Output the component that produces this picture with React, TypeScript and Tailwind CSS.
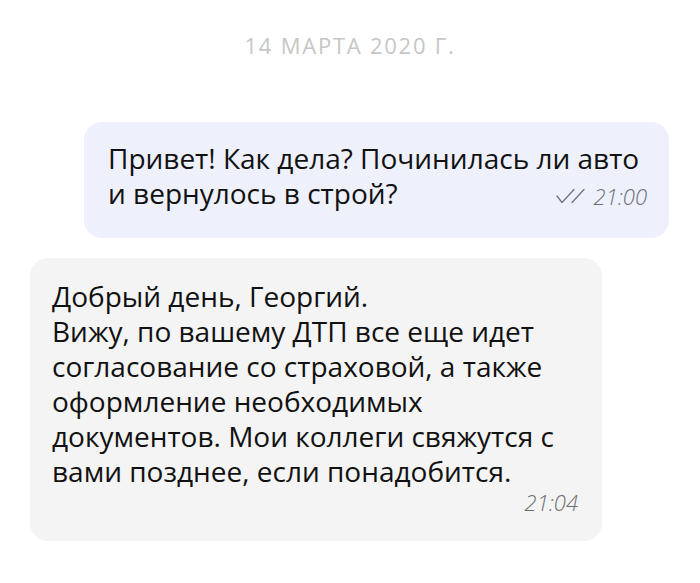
import { Fragment } from 'react';

const font = { fontFamily: '"Open Sans", "Noto Sans", sans-serif' };

const DoubleCheck = () => (
  <svg width="30" height="16" viewBox="0 0 30 16" fill="none" className="mr-2">
    <path d="M1 8 L6 14.5 L18 1.5" stroke="#707482" strokeWidth="1.3" strokeLinecap="round" strokeLinejoin="round" />
    <path d="M16 14.5 L28 1.5" stroke="#707482" strokeWidth="1.3" strokeLinecap="round" />
  </svg>
);

const lines = [
  'Добрый день, Георгий.',
  'Вижу, по вашему ДТП все еще идет',
  'согласование со страховой, а также',
  'оформление необходимых',
  'документов. Мои коллеги свяжутся с',
  'вами позднее, если понадобится.',
];

export default function App() {
  return (
    <div className="w-[700px] h-[583px] bg-white flex flex-col" style={font}>
      <div className="pt-[30px] text-center text-[22px] leading-[30px] tracking-[0.08em] text-[#c6c6c6]">
        14 МАРТА 2020 Г.
      </div>

      <div className="mt-[62px] ml-[84px] mr-[31px] rounded-[18px] bg-[#eef0fb] pl-6 pr-[22px] pt-[19px] pb-[27px]">
        <p className="text-[28px] leading-[35px] text-[#111]">
          Привет! Как дела? Починилась ли авто
        </p>
        <div className="flex items-center justify-between">
          <p className="text-[28px] leading-[35px] text-[#111]">и вернулось в строй?</p>
          <div className="flex items-center text-[22px] leading-[26px] font-light italic text-[#6c707e] mt-[5px]">
            <DoubleCheck />
            21:00
          </div>
        </div>
      </div>

      <div className="mt-[20px] ml-[30px] mr-[98px] rounded-[18px] bg-[#f4f4f4] pl-[22px] pr-6 pt-[21px] pb-[26px]">
        <p className="text-[28px] leading-[35px] text-[#111]">
          {lines.map((l, i) => (
            <Fragment key={i}>
              {l}
              <br />
            </Fragment>
          ))}
        </p>
        <div className="text-right text-[22px] leading-[26px] font-light italic text-[#6e6e6e]">21:04</div>
      </div>
    </div>
  );
}
